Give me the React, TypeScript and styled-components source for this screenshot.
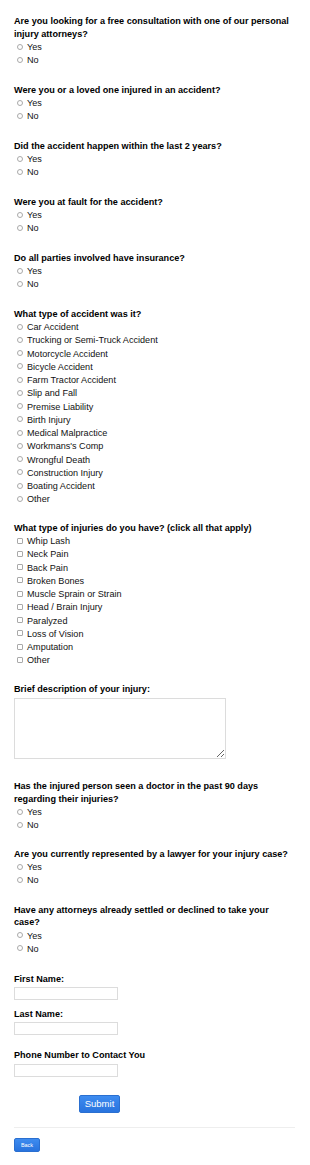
import React from "react";
import styled, { createGlobalStyle } from "styled-components";

const GlobalStyle = createGlobalStyle`
  body {
    margin: 0;
    background: #ffffff;
    font-family: "Liberation Sans", Arial, sans-serif;
    color: #000;
  }
`;

type Question = {
  label: string;
  kind: "radio" | "checkbox";
  options: string[];
};

const yesNo = ["Yes", "No"];

const topQuestions: Question[] = [
  { label: "Are you looking for a free consultation with one of our personal injury attorneys?", kind: "radio", options: yesNo },
  { label: "Were you or a loved one injured in an accident?", kind: "radio", options: yesNo },
  { label: "Did the accident happen within the last 2 years?", kind: "radio", options: yesNo },
  { label: "Were you at fault for the accident?", kind: "radio", options: yesNo },
  { label: "Do all parties involved have insurance?", kind: "radio", options: yesNo },
  {
    label: "What type of accident was it?",
    kind: "radio",
    options: [
      "Car Accident",
      "Trucking or Semi-Truck Accident",
      "Motorcycle Accident",
      "Bicycle Accident",
      "Farm Tractor Accident",
      "Slip and Fall",
      "Premise Liability",
      "Birth Injury",
      "Medical Malpractice",
      "Workmans's Comp",
      "Wrongful Death",
      "Construction Injury",
      "Boating Accident",
      "Other",
    ],
  },
  {
    label: "What type of injuries do you have? (click all that apply)",
    kind: "checkbox",
    options: [
      "Whip Lash",
      "Neck Pain",
      "Back Pain",
      "Broken Bones",
      "Muscle Sprain or Strain",
      "Head / Brain Injury",
      "Paralyzed",
      "Loss of Vision",
      "Amputation",
      "Other",
    ],
  },
];

const lowerQuestions: Question[] = [
  { label: "Has the injured person seen a doctor in the past 90 days regarding their injuries?", kind: "radio", options: yesNo },
  { label: "Are you currently represented by a lawyer for your injury case?", kind: "radio", options: yesNo },
  { label: "Have any attorneys already settled or declined to take your case?", kind: "radio", options: yesNo },
];

const Page = styled.div`
  padding: 15px 15px 10px 14px;
`;

const Form = styled.form`
  display: flex;
  flex-direction: column;
`;

const Block = styled.div<{ $gap?: number }>`
  display: flex;
  flex-direction: column;
  margin-bottom: ${(p) => p.$gap ?? 16}px;
`;

const Label = styled.div`
  font-size: 9.1px;
  font-weight: bold;
  line-height: 12.5px;
  width: 279px;
  margin-bottom: 1px;
`;

const Option = styled.label`
  display: flex;
  align-items: center;
  gap: 4px;
  padding-left: 3px;
  font-size: 9.1px;
  line-height: 13.25px;
  height: 13.25px;
  color: #111;
`;

const Mark = styled.input<{ $round: boolean }>`
  appearance: none;
  margin: 0 0 2px 0;
  width: 6px;
  height: 6px;
  border: 1px solid #a9a9a9;
  border-radius: ${(p) => (p.$round ? "50%" : "1px")};
  background: #fff;
  flex: none;
`;

const TextArea = styled.textarea`
  display: block;
  margin-top: 2px;
  width: 212px;
  height: 61px;
  box-sizing: border-box;
  border: 1px solid #dcdcdc;
  resize: vertical;
`;

const TextInput = styled.input`
  display: block;
  width: 104px;
  height: 13px;
  box-sizing: border-box;
  border: 1px solid #dcdcdc;
  padding: 0 3px;
`;

const FieldLabel = styled(Label)<{ $space: number }>`
  margin-bottom: ${(p) => p.$space}px;
`;

const SubmitButton = styled.button`
  display: block;
  margin: 18px 0 0 65px;
  width: 41px;
  height: 18px;
  padding: 0;
  border: 1px solid #2a6fd0;
  border-radius: 2px;
  background: linear-gradient(#3e8cf0, #2873de);
  color: #fff;
  font-family: "Liberation Sans", Arial, sans-serif;
  font-size: 9.5px;
  line-height: 16px;
`;

const Divider = styled.hr`
  margin: 14px 0 10px 0;
  width: 281px;
  border: none;
  border-top: 1px solid #eeeeee;
`;

const BackButton = styled.button`
  display: block;
  width: 26px;
  height: 14px;
  padding: 0;
  border: 1px solid #2a6fd0;
  border-radius: 2px;
  background: linear-gradient(#3e8cf0, #2873de);
  color: #fff;
  font-family: "Liberation Sans", Arial, sans-serif;
  font-size: 5.5px;
  line-height: 12px;
`;

const QuestionBlock = ({ q, idx, gap }: { q: Question; idx: string; gap?: number }) => (
  <Block $gap={gap}>
    <Label>{q.label}</Label>
    {q.options.map((o) => (
      <Option key={o}>
        <Mark type={q.kind} name={idx} $round={q.kind === "radio"} />
        {o}
      </Option>
    ))}
  </Block>
);

export default function App() {
  return (
    <Page>
      <GlobalStyle />
      <Form onSubmit={(e) => e.preventDefault()}>
        {topQuestions.map((q, i) => (
          <QuestionBlock key={q.label} q={q} idx={`t${i}`} gap={i >= 5 ? 15 : 16} />
        ))}
        <Block $gap={21}>
          <Label>Brief description of your injury:</Label>
          <TextArea />
        </Block>
        {lowerQuestions.map((q, i) => (
          <QuestionBlock key={q.label} q={q} idx={`l${i}`} gap={i === 2 ? 17 : i === 0 ? 15 : 16} />
        ))}
        <Block $gap={8}>
          <FieldLabel $space={1}>First Name:</FieldLabel>
          <TextInput />
        </Block>
        <Block $gap={14}>
          <FieldLabel $space={2}>Last Name:</FieldLabel>
          <TextInput />
        </Block>
        <Block $gap={0}>
          <FieldLabel $space={2}>Phone Number to Contact You</FieldLabel>
          <TextInput />
        </Block>
        <SubmitButton type="submit">Submit</SubmitButton>
      </Form>
      <Divider />
      <BackButton type="button">Back</BackButton>
    </Page>
  );
}
